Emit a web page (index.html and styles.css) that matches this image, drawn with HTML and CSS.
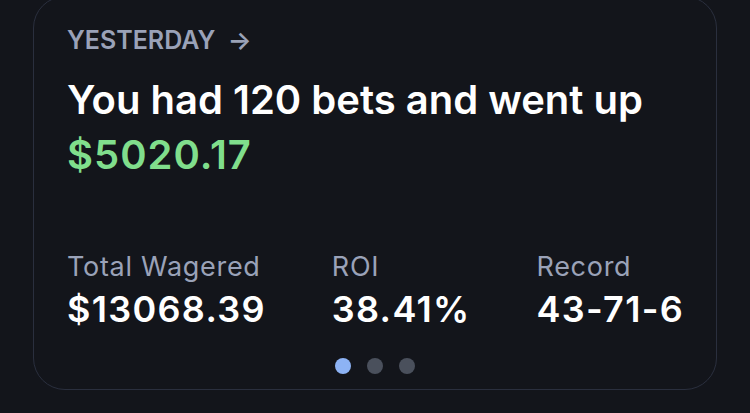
FILE: index.html
```html
<!DOCTYPE html>
<html>
<head>
<meta charset="utf-8">
<link rel="stylesheet" href="styles.css">
</head>
<body>
<div class="card">
  <div class="eyebrow">YESTERDAY <span class="arrow">→</span></div>
  <div class="headline">You had 120 bets and went up <span class="gain">$5020.17</span></div>
  <div class="stats">
    <div class="stat">
      <div class="label">Total Wagered</div>
      <div class="value">$13068.39</div>
    </div>
    <div class="stat">
      <div class="label">ROI</div>
      <div class="value">38.41%</div>
    </div>
    <div class="stat">
      <div class="label">Record</div>
      <div class="value">43-71-6</div>
    </div>
  </div>
  <div class="dots">
    <span class="dot active"></span>
    <span class="dot"></span>
    <span class="dot"></span>
  </div>
</div>
</body>
</html>
```
FILE: styles.css
```css
html, body {
  margin: 0;
  padding: 0;
  background: #13151b;
  height: 413px;
  overflow: hidden;
}
body {
  font-family: Inter, "Noto Sans", sans-serif;
  color: #ffffff;
}
.card {
  margin: -4px 33px 0 33px;
  height: 394px;
  box-sizing: border-box;
  border: 1px solid #2a2f3e;
  border-radius: 32px;
  padding: 28px 33px 0 33px;
  display: flex;
  flex-direction: column;
}
.eyebrow {
  font-size: 25px;
  font-weight: 600;
  color: #9aa2b8;
  line-height: 30px;
}
.arrow {
  margin-left: 6px;
}
.headline {
  margin-top: 17px;
  font-size: 40px;
  font-weight: 600;
  line-height: 55px;
  width: 610px;
}
.gain {
  color: #80de8c;
  letter-spacing: 1px;
}
.stats {
  margin-top: 68px;
  display: flex;
  gap: 66px;
}
.stat {
  flex: none;
  white-space: nowrap;
}
.label {
  font-size: 27px;
  color: #9aa2b8;
  line-height: 34px;
  letter-spacing: 0.7px;
}
.value {
  font-size: 36px;
  font-weight: 600;
  line-height: 44px;
  margin-top: 3px;
  letter-spacing: 1.3px;
}
.dots {
  margin-top: 27px;
  display: flex;
  justify-content: center;
  gap: 16px;
}
.dot {
  width: 16px;
  height: 16px;
  border-radius: 50%;
  background: #4a505c;
}
.dot.active {
  background: #8db3f5;
}
```
